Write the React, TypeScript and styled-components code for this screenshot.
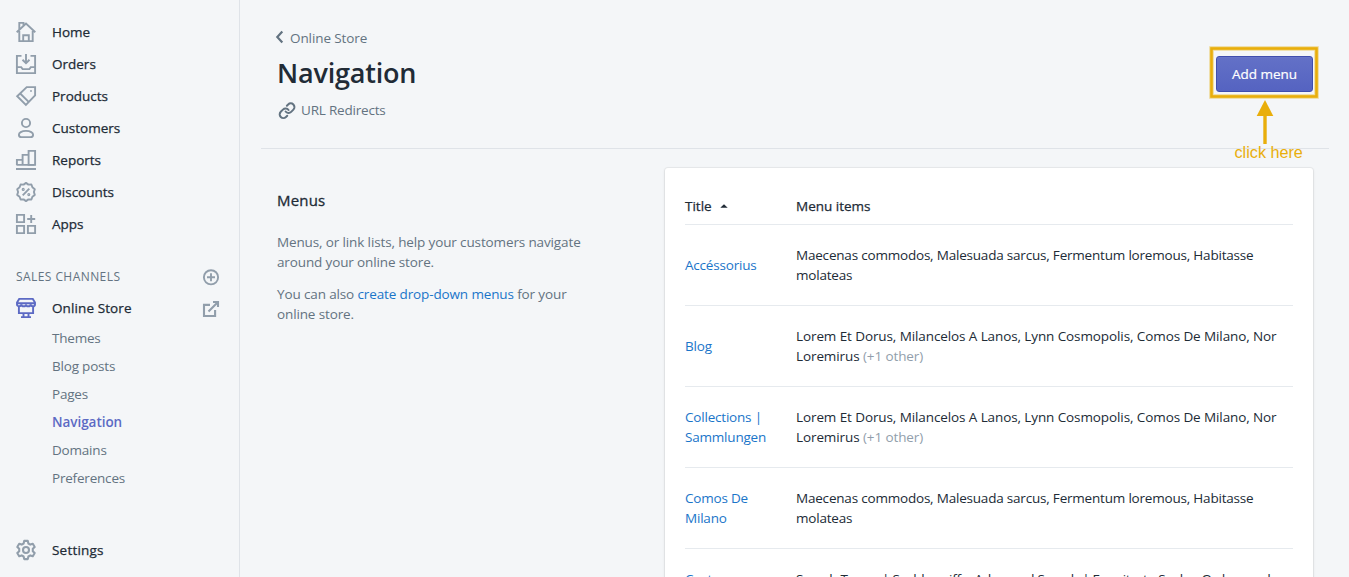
import React from "react";
import styled, { createGlobalStyle } from "styled-components";

const Global = createGlobalStyle`
  *, *::before, *::after { box-sizing: border-box; }
  html, body { margin: 0; height: 577px; overflow: hidden; background: #f4f6f8; }
  body { font-family: "Open Sans", "Noto Sans", sans-serif; font-size: 13.5px; line-height: 20px; color: #212b36; }
`;

const Shell = styled.div`
  display: flex;
  height: 577px;
  overflow: hidden;
`;

const Sidebar = styled.nav`
  display: flex;
  flex-direction: column;
  width: 240px;
  flex: none;
  padding: 16px 20px 11px 16px;
  border-right: 1px solid #dfe3e8;
`;

const NavRow = styled.a<{ $track?: number }>`
  display: flex;
  align-items: center;
  gap: 16px;
  height: 32px;
  letter-spacing: ${(p) => p.$track ?? 0}px;
  color: #212b36;
  -webkit-text-stroke: 0.25px currentColor;
`;

const NavLabel = styled.span`
  flex: 1;
`;

const SectionTitle = styled.div`
  display: flex;
  align-items: center;
  justify-content: space-between;
  height: 31px;
  margin-top: 21px;
  font-size: 12px;
  line-height: 21px;
  letter-spacing: 0.43px;
  color: #637381;
`;

const SubList = styled.div`
  display: flex;
  flex-direction: column;
  padding-left: 36px;
`;

const SubItem = styled.a<{ $active?: boolean }>`
  height: 28px;
  line-height: 28px;
  letter-spacing: ${(p) => (p.$active ? -0.05 : -0.2)}px;
  color: ${(p) => (p.$active ? "#5c6ac4" : "#637381")};
  font-weight: ${(p) => (p.$active ? 600 : 400)};
`;

const Spacer = styled.div`
  flex: 1;
`;

const Icon = styled.svg<{ $size?: number; $color?: string; $stroke?: number }>`
  width: ${(p) => p.$size ?? 20}px;
  height: ${(p) => p.$size ?? 20}px;
  flex: none;
  display: block;
  overflow: visible;
  fill: none;
  stroke: ${(p) => p.$color ?? "#919eab"};
  stroke-width: ${(p) => p.$stroke ?? 1.9};
`;

const ExternalIcon = styled(Icon)`
  margin-top: 2px;
`;

const Main = styled.main`
  flex: 1;
  padding: 28px 20px 0 21px;
`;

const Header = styled.header`
  display: flex;
  justify-content: space-between;
  align-items: flex-start;
  height: 121px;
  padding: 0 16px;
  border-bottom: 1px solid #dfe3e8;
`;

const HeaderText = styled.div`
  display: flex;
  flex-direction: column;
`;

const Breadcrumb = styled.a`
  display: flex;
  align-items: center;
  height: 20px;
  gap: 5px;
  margin-left: -2px;
  letter-spacing: -0.1px;
  color: #637381;
`;

const BackArrow = styled(Icon)`
  margin-top: -3px;
`;

const Heading = styled.h1`
  margin: 7px 0 0;
  font-size: 27px;
  line-height: 36px;
  font-weight: 600;
  letter-spacing: -0.2px;
`;

const PageAction = styled.a`
  display: flex;
  align-items: center;
  gap: 4px;
  height: 20px;
  margin-top: 9px;
  letter-spacing: -0.2px;
  color: #637381;
`;

const ButtonSpot = styled.div`
  position: relative;
  margin-top: 28px;
`;

const PrimaryButton = styled.button`
  display: block;
  width: 97px;
  height: 36px;
  padding: 0;
  border: 1px solid #3f4eae;
  border-radius: 3px;
  background: linear-gradient(#6371c7, #5563c1);
  box-shadow: inset 0 1px 0 #6774c8;
  color: #fff;
  font: 400 13.5px/20px "Open Sans", sans-serif;
  -webkit-text-stroke: 0.2px currentColor;
`;

const Callout = styled.svg`
  position: absolute;
  left: -7px;
  top: -10px;
  width: 110px;
  height: 120px;
  overflow: visible;
`;

const Columns = styled.section`
  display: flex;
  padding: 19px 16px 0 16px;
`;

const About = styled.div`
  width: 388px;
  flex: none;
  padding-top: 20px;
  color: #637381;
  letter-spacing: -0.13px;
`;

const AboutTitle = styled.h2`
  margin: 0 0 20px;
  font-size: 15px;
  line-height: 24px;
  font-weight: 400;
  letter-spacing: 0.2px;
  color: #212b36;
  -webkit-text-stroke: 0.3px currentColor;
`;

const Paragraph = styled.p`
  margin: 0 0 12px;
`;

const Link = styled.a`
  color: #1a75c9;
`;

const Card = styled.div`
  flex: 1;
  height: 480px;
  padding: 20px 20px 0;
  border-radius: 3px;
  background: #fff;
  box-shadow: 0 0 0 1px rgba(63, 63, 68, 0.06), 0 1px 3px rgba(63, 63, 68, 0.15);
`;

const HeadRow = styled.div`
  display: grid;
  grid-template-columns: 111px 1fr;
  align-items: center;
  height: 37px;
  border-bottom: 1px solid #e6eaee;
  -webkit-text-stroke: 0.25px currentColor;
`;

const Row = styled.div`
  display: grid;
  grid-template-columns: 111px 1fr;
  align-items: center;
  height: 81px;
  border-bottom: 1px solid #e6eaee;
`;

const TitleCell = styled.div`
  padding-right: 24px;
  letter-spacing: -0.2px;
`;

const ItemsCell = styled.div<{ $track: number }>`
  letter-spacing: ${(p) => p.$track}px;
`;

const Sortable = styled.span`
  display: flex;
  align-items: center;
  gap: 8px;
`;

const Muted = styled.span`
  color: #919eab;
`;

const nav: [string, React.ReactNode][] = [
  ["Home", <><path d="M3.3 9v10.1h13.4V9M.7 10.2 10 1.6l9.3 8.6M3.3 7.5V.9h4.2V4" /><path d="M7.2 19v-5.8h5.6V19" /></>],
  ["Orders", <><path d="M5.5 1.9H.9v17.2h18.2V1.9h-4.6M10 0v9M6.5 5.8 10 9.2l3.5-3.4" /><path d="M1 13.1h4.2l1.4 2h6.8l1.4-2H19" /></>],
  ["Products", <><path d="M1.2 10.2 10.7 1.1h8.4v8.300l-9.200 9.600ZM4.200 7.500l8.700 8.600" /><circle cx="15" cy="5" r=".6" strokeWidth="1" /></>],
  ["Customers", <><circle cx="10" cy="5" r="4.1" /><path d="M10 12.9c-4.5 0-7.1 1.9-7.1 3.8 0 1.5 1.1 2.4 2.5 2.4h9.2c1.4 0 2.5-.9 2.5-2.4 0-1.9-2.6-3.8-7.1-3.8Z" /></>],
  ["Reports", <><path d="M.9 14.9v-5h5.7v5M6.6 14.9V4.9h6v10M12.6 14.9V.9h6.5v14Z" /><path d="M.5 14.9h18M0 19h20" /></>],
  ["Discounts", <><path d="M10 .9 12.4 2.6 15.4 2.5 16.4 5.3 18.8 7.2 17.9 10 18.8 12.9 16.4 14.7 15.4 17.5 12.4 17.4 10 19.1 7.6 17.4 4.6 17.5 3.6 14.7 1.2 12.9 2.1 10 1.2 7.2 3.6 5.3 4.6 2.5 7.6 2.6Z" strokeLinejoin="round" /><path d="m6.7 13.3 6.6-6.6" /><circle cx="7.2" cy="7.4" r=".6" /><circle cx="12.8" cy="12.6" r=".6" /></>],
  ["Apps", <path d="M.9.9h7.2v7.2H.9ZM.9 11.9h7.2v7.2H.9ZM11.9 11.9h7.2v7.2h-7.2ZM15.2 1v8M11.2 5h8" />],
];

const rows: { title: string; items: string; more?: boolean; track: number }[] = [
  { title: "Accéssorius", items: "Maecenas commodos, Malesuada sarcus, Fermentum loremous, Habitasse molateas", track: -0.2 },
  { title: "Blog", items: "Lorem Et Dorus, Milancelos A Lanos, Lynn Cosmopolis, Comos De Milano, Nor Loremirus", more: true, track: -0.1 },
  { title: "Collections | Sammlungen", items: "Lorem Et Dorus, Milancelos A Lanos, Lynn Cosmopolis, Comos De Milano, Nor Loremirus", more: true, track: -0.1 },
  { title: "Comos De Milano", items: "Maecenas commodos, Malesuada sarcus, Fermentum loremous, Habitasse molateas", track: -0.2 },
  { title: "Customer Service", items: "Search Terms | Sachbegriffe, Advanced Search | Erweiterte Suche, Orders and Returns", track: -0.24 },
];

export default function App() {
  return (
    <Shell>
      <Global />
      <Sidebar>
        {nav.map(([label, art]) => (
          <NavRow key={label}><Icon viewBox="0 0 20 20">{art}</Icon><NavLabel>{label}</NavLabel></NavRow>
        ))}
        <SectionTitle>
          SALES CHANNELS
          <Icon $size={16} viewBox="0 -0.3 16 16"><circle cx="8" cy="8" r="7.1" /><path d="M8 4v8M4 8h8" /></Icon>
        </SectionTitle>
        <NavRow $track={0.1}>
          <Icon viewBox="0 0 20 20" $color="#5c6ac4">
            <path d="M3.2.9h13.6L19 4.4v2c0 2.5-4.3 2.5-4.5 0 0 2.5-4.5 2.5-4.5 0 0 2.5-4.5 2.5-4.5 0C5.3 8.9 1 8.9 1 6.4v-2ZM1 5.2h18M2.9 8.5v6.6h14.2V8.5M7.5 15v3.5M12.5 15v3.5M5 19.1h10" />
          </Icon>
          <NavLabel>Online Store</NavLabel>
          <ExternalIcon $size={16} $stroke={2.1} viewBox="0 0 16 16"><path d="M7 3.9H1V15h11.1V9M10 1h5V6M5.5 10.500 15 1" /></ExternalIcon>
        </NavRow>
        <SubList>
          {["Themes", "Blog posts", "Pages", "Navigation", "Domains", "Preferences"].map((s) => (
            <SubItem key={s} $active={s === "Navigation"}>{s}</SubItem>
          ))}
        </SubList>
        <Spacer />
        <NavRow $track={0.2}>
          <Icon viewBox="0 0 20 20" $stroke={2.1}>
            <circle cx="10" cy="10" r="3" />
            <path strokeLinejoin="round" d="M8.2.9h3.6l.6 2.6 1.9 1.1 2.5-.8 1.9 3.2-1.9 1.8v2.4l1.9 1.8-1.9 3.2-2.5-.8-1.9 1.1-.6 2.6H8.2l-.6-2.6-1.9-1.1-2.5.8L1.3 13l1.9-1.8V8.8L1.3 7l1.9-3.2 2.5.8 1.9-1.1Z" />
          </Icon>
          <NavLabel>Settings</NavLabel>
        </NavRow>
      </Sidebar>
      <Main>
        <Header>
          <HeaderText>
            <Breadcrumb>
              <BackArrow viewBox="0 0 10 10" $size={10} $color="#637381" $stroke={2.2}><path d="M7.3-.5 2.3 5l5 5.5" /></BackArrow>
              Online Store
            </Breadcrumb>
            <Heading>Navigation</Heading>
            <PageAction>
              <Icon viewBox="0 0 24 24" $color="#637381" $stroke={2.7}>
                <g transform="translate(1.4 2.2) scale(.89)" strokeLinecap="round">
                  <path d="M10 13a5 5 0 0 0 7.54.54l3-3a5 5 0 0 0-7.07-7.07l-1.72 1.71" />
                  <path d="M14 11a5 5 0 0 0-7.54-.54l-3 3a5 5 0 0 0 7.07 7.07l1.71-1.71" />
                </g>
              </Icon>
              URL Redirects
            </PageAction>
          </HeaderText>
          <ButtonSpot>
            <PrimaryButton>Add menu</PrimaryButton>
            <Callout viewBox="0 0 110 120">
              <rect x="2.5" y="2.5" width="105" height="48" fill="none" stroke="#e9ae0b" strokeOpacity="0.4" strokeWidth="4.6" />
              <rect x="2.5" y="2.5" width="105" height="48" fill="none" stroke="#e9ae0b" strokeWidth="2.6" />
              <path d="M56 66V98" stroke="#e9ae0b" strokeWidth="3.4" />
              <path d="M56 54 64.3 70H47.7Z" fill="#e9ae0b" />
              <text x="25.5" y="112" fontFamily="Liberation Sans" fontSize="16.2" fill="#e9ae0b">click here</text>
            </Callout>
          </ButtonSpot>
        </Header>
        <Columns>
          <About>
            <AboutTitle>Menus</AboutTitle>
            <Paragraph>Menus, or link lists, help your customers navigate<br />around your online store.</Paragraph>
            <Paragraph>You can also <Link>create drop-down menus</Link> for your<br />online store.</Paragraph>
          </About>
          <Card>
            <HeadRow>
              <Sortable>Title <Icon $size={8} viewBox="0 0 8 8"><path d="M.3 5.7 4 2.2l3.7 3.5Z" fill="#212b36" stroke="none" /></Icon></Sortable>
              <span>Menu items</span>
            </HeadRow>
            {rows.map(({ title, items, more, track }) => (
              <Row key={title}>
                <TitleCell><Link>{title}</Link></TitleCell>
                <ItemsCell $track={track}>{items}{more && <Muted> (+1 other)</Muted>}</ItemsCell>
              </Row>
            ))}
          </Card>
        </Columns>
      </Main>
    </Shell>
  );
}
